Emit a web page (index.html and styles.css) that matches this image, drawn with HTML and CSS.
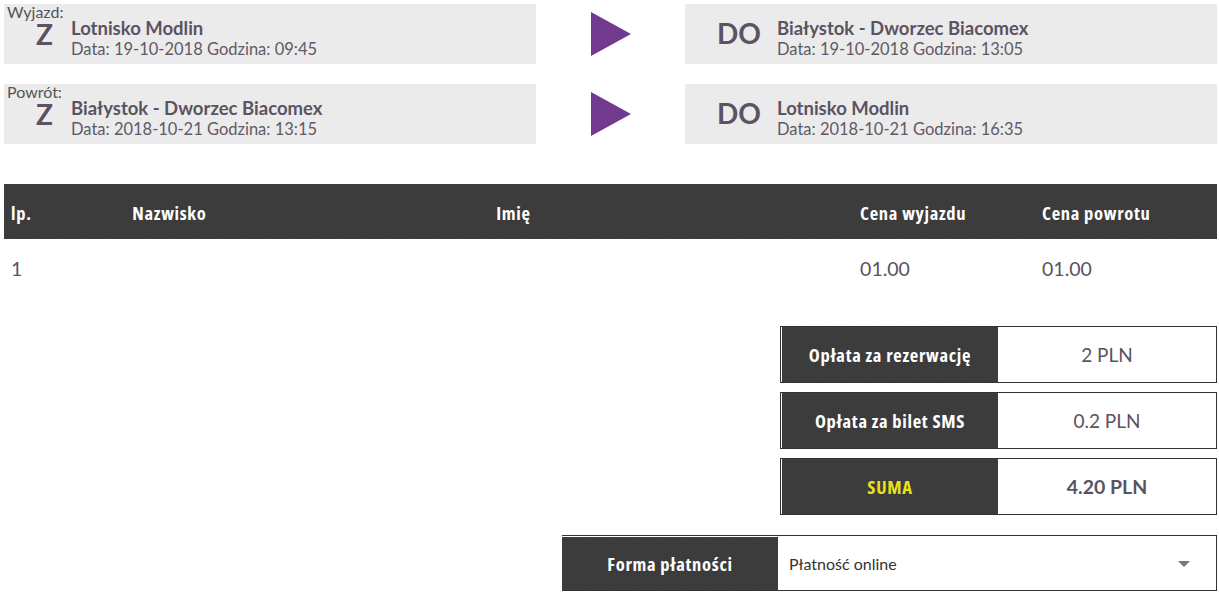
FILE: index.html
```html
<!doctype html>
<html lang="pl">
<head>
    <meta charset="UTF-8">
    <title>Rezerwacja - podsumowanie</title>
    <link rel="stylesheet" href="styles.css">
</head>
<body>
<div class="summary">
    <div class="tripRow">
        <div class="tripBox">
            <div class="tripSide">
                <span class="tripLabel">Wyjazd:</span>
                <span class="tripLetter">Z</span>
            </div>
            <div class="tripInfo">
                <div class="tripStop">Lotnisko Modlin</div>
                <div class="tripDate">Data: 19-10-2018 Godzina: 09:45</div>
            </div>
        </div>
        <div class="tripArrow"><span class="arrow"></span></div>
        <div class="tripBox">
            <div class="tripSide to">
                <span class="tripLetter">DO</span>
            </div>
            <div class="tripInfo">
                <div class="tripStop">Białystok - Dworzec Biacomex</div>
                <div class="tripDate">Data: 19-10-2018 Godzina: 13:05</div>
            </div>
        </div>
    </div>
    <div class="tripRow">
        <div class="tripBox">
            <div class="tripSide">
                <span class="tripLabel">Powrót:</span>
                <span class="tripLetter">Z</span>
            </div>
            <div class="tripInfo">
                <div class="tripStop">Białystok - Dworzec Biacomex</div>
                <div class="tripDate">Data: 2018-10-21 Godzina: 13:15</div>
            </div>
        </div>
        <div class="tripArrow"><span class="arrow"></span></div>
        <div class="tripBox">
            <div class="tripSide to">
                <span class="tripLetter">DO</span>
            </div>
            <div class="tripInfo">
                <div class="tripStop">Lotnisko Modlin</div>
                <div class="tripDate">Data: 2018-10-21 Godzina: 16:35</div>
            </div>
        </div>
    </div>

    <table class="passengers">
        <thead>
        <tr>
            <th class="colNr">lp.</th>
            <th class="colWide">Nazwisko</th>
            <th class="colWide">Imię</th>
            <th>Cena wyjazdu</th>
            <th>Cena powrotu</th>
        </tr>
        </thead>
        <tbody>
        <tr>
            <td>1</td>
            <td></td>
            <td></td>
            <td>01.00</td>
            <td>01.00</td>
        </tr>
        </tbody>
    </table>

    <div class="fees">
        <div class="feeRow">
            <div class="feeLabel">Opłata za rezerwację</div>
            <div class="feeValue">2 PLN</div>
        </div>
        <div class="feeRow">
            <div class="feeLabel">Opłata za bilet SMS</div>
            <div class="feeValue">0.2 PLN</div>
        </div>
        <div class="feeRow total">
            <div class="feeLabel">SUMA</div>
            <div class="feeValue">4.20 PLN</div>
        </div>
    </div>

    <div class="payment">
        <div class="paymentLabel">Forma płatności</div>
        <div class="paymentSelect">
            <span>Płatność online</span>
            <span class="caret"></span>
        </div>
    </div>
</div>
</body>
</html>
```

FILE: styles.css
```css
body {
    margin: 0;
    background: #fff;
    font-family: Lato, "Open Sans", sans-serif;
    color: #5b5361;
}

.summary {
    padding: 4px 2px 4px 4px;
}

.tripRow {
    display: flex;
    height: 60px;
    margin-bottom: 20px;
}

.tripBox {
    width: 532px;
    display: flex;
    background: #ebebeb;
}

.tripArrow {
    flex: 1;
    display: flex;
    justify-content: center;
    padding-top: 8px;
}

.arrow {
    width: 0;
    height: 0;
    border-top: 22px solid transparent;
    border-bottom: 22px solid transparent;
    border-left: 40px solid #723a8e;
}

.tripSide {
    width: 67px;
    padding-left: 3px;
    box-sizing: border-box;
}

.tripSide.to {
    width: 92px;
    padding-left: 32px;
    padding-top: 14px;
}

.tripLabel {
    display: block;
    font-size: 16px;
    line-height: 16px;
    color: #555;
}

.tripLetter {
    display: block;
    font-size: 28px;
    font-weight: bold;
    line-height: 30px;
    color: #5b5361;
}

.tripSide:not(.to) .tripLetter {
    margin-left: 29px;
    line-height: 26px;
    padding-top: 1px;
}

.tripInfo {
    padding-top: 13px;
}

.tripStop {
    font-size: 18.5px;
    font-weight: bold;
    line-height: 22px;
}

.tripDate {
    font-size: 16.5px;
    line-height: 20px;
    color: #5f5a66;
}

.passengers {
    width: 100%;
    border-collapse: collapse;
    margin-top: 40px;
    table-layout: fixed;
}

.passengers th,
.passengers td {
    box-sizing: border-box;
    padding: 0 0 0 7px;
    text-align: left;
}

.passengers th {
    height: 55px;
    padding-top: 2px;
    font-family: "Open Sans", sans-serif;
    font-stretch: 75%;
    font-weight: bold;
    font-size: 18.5px;
    letter-spacing: 0.7px;
    color: #fff;
    background-color: #3d3d3d;
    background-image: linear-gradient(45deg, #383838 25%, transparent 25%, transparent 75%, #383838 75%);
    background-size: 3px 3px;
}

.passengers .colNr {
    width: 10%;
}

.passengers .colWide {
    width: 30%;
}

.passengers td {
    height: 58px;
    font-size: 19.5px;
    color: #5b5361;
}

.fees {
    width: 437px;
    margin: 29px 0 0 auto;
}

.feeRow {
    display: flex;
    height: 57px;
    border: 1px solid #333;
    box-sizing: border-box;
    margin-bottom: 9px;
}

.feeLabel,
.paymentLabel {
    width: 216px;
    margin-left: 1px;
    display: flex;
    align-items: center;
    justify-content: center;
    font-family: "Open Sans", sans-serif;
    font-stretch: 75%;
    font-weight: bold;
    font-size: 18.5px;
    letter-spacing: 0.7px;
    color: #fff;
    background-color: #3d3d3d;
    background-image: linear-gradient(45deg, #383838 25%, transparent 25%, transparent 75%, #383838 75%);
    background-size: 3px 3px;
}

.feeValue {
    flex: 1;
    display: flex;
    align-items: center;
    justify-content: center;
    font-size: 19px;
    color: #5b5361;
}

.feeRow.total .feeLabel {
    color: #e8e21a;
}

.feeRow.total .feeValue {
    font-weight: bold;
    font-size: 19.5px;
}

.payment {
    width: 655px;
    height: 56px;
    margin: 20px 0 0 auto;
    display: flex;
    border: 1px solid #333;
    border-left: none;
    box-sizing: border-box;
    padding-top: 1px;
}

.paymentLabel {
    margin-left: 0;
}

.paymentSelect {
    flex: 1;
    display: flex;
    align-items: center;
    justify-content: space-between;
    padding: 0 26px 0 11px;
    font-size: 16px;
    color: #333;
}

.caret {
    width: 0;
    height: 0;
    border-left: 6px solid transparent;
    border-right: 6px solid transparent;
    border-top: 6px solid #777;
}
```
